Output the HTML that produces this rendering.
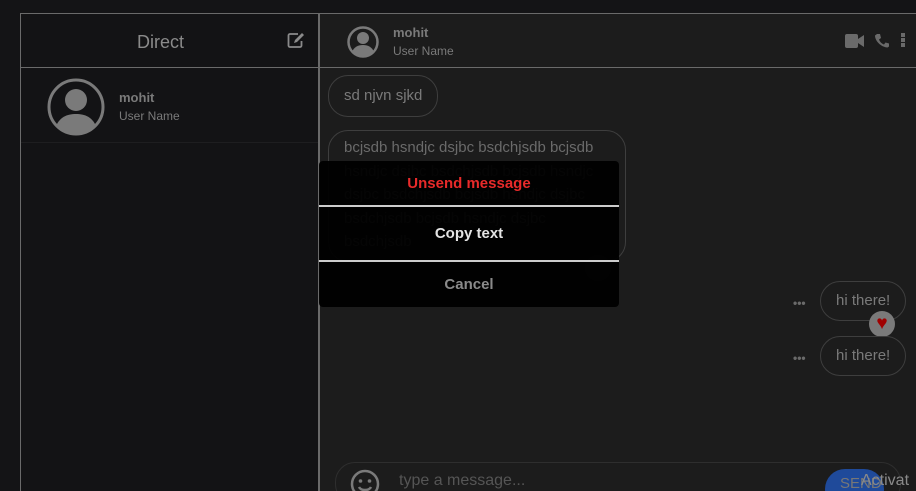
<!DOCTYPE html>
<html style="margin:0;width:916px;height:491px;overflow:hidden"><head><style>
body{margin:0;width:916px;height:491px;overflow:hidden;background:#141416;font-family:"Liberation Sans",sans-serif;position:relative}
.abs{position:absolute}
.left{left:20px;top:13px;width:297px;height:478px;border:1px solid #6a6a6a;border-bottom:none;background:#131315}
.right{left:319px;top:13px;width:597px;height:478px;border-top:1px solid #6a6a6a;border-left:1px solid #6a6a6a;background:#1c1c1c;overflow:hidden}
.bubble{position:absolute;border:1px solid #3e3e3e;border-radius:20px;color:#7a7a7a;font-size:15px;line-height:22px}
</style></head><body>
<div class="abs left">
 <div class="abs" style="left:0;top:0;width:297px;height:53px;border-bottom:1px solid #6a6a6a"></div>
 <div class="abs" style="left:116px;top:18px;color:#8a8a8a;font-size:18px">Direct</div>
 <svg class="abs" style="left:266px;top:18px" width="18" height="16" viewBox="0 0 18 16"><path d="M11 2H3a1.5 1.5 0 0 0-1.5 1.5v10A1.5 1.5 0 0 0 3 15h10a1.5 1.5 0 0 0 1.5-1.5V9" fill="none" stroke="#8a8a8a" stroke-width="1.8"/><path d="M15 1l2 2-7 7-3 1 1-3z" fill="#8a8a8a"/></svg>
 <svg class="abs" style="left:26px;top:64px" width="58" height="58" viewBox="0 0 58 58"><circle cx="29" cy="29" r="27" fill="none" stroke="#7a7a7a" stroke-width="3"/><circle cx="29" cy="22" r="11" fill="#7a7a7a"/><path d="M9 48c4-9 11-12 20-12s16 3 20 12a27 27 0 0 1-40 0z" fill="#7a7a7a"/></svg>
 <div class="abs" style="left:98px;top:76px;color:#7a7a7a;font-size:13px;font-weight:bold">mohit</div>
 <div class="abs" style="left:98px;top:95px;color:#7a7a7a;font-size:12px">User Name</div>
 <div class="abs" style="left:0;top:128px;width:297px;height:1px;background:#1e1e20"></div>
</div>
<div class="abs right">
 <div class="abs" style="left:0;top:0;width:600px;height:53px;border-bottom:1px solid #6a6a6a"></div>
 <svg class="abs" style="left:27px;top:12px" width="32" height="32" viewBox="0 0 32 32"><circle cx="16" cy="16" r="14.5" fill="none" stroke="#7a7a7a" stroke-width="2.5"/><circle cx="16" cy="12" r="6" fill="#7a7a7a"/><path d="M5 26c2-5 6-7 11-7s9 2 11 7a15 15 0 0 1-22 0z" fill="#7a7a7a"/></svg>
 <div class="abs" style="left:73px;top:11px;color:#7a7a7a;font-size:13px;font-weight:bold">mohit</div>
 <div class="abs" style="left:73px;top:30px;color:#7a7a7a;font-size:12px">User Name</div>
 <svg class="abs" style="left:525px;top:20px" width="20" height="14" viewBox="0 0 20 14"><rect x="0" y="0" width="13" height="14" rx="2" fill="#6a6a6a"/><path d="M13 5l6-4v12l-6-4z" fill="#6a6a6a"/></svg>
 <svg class="abs" style="left:555px;top:19px" width="14" height="15" viewBox="0 0 14 15"><path d="M2 1l3 0 1 4-2 1.5c1 2.5 2.5 4 5 5L10.5 9.5l3.5 1v3l-1.5 1C6 14 0 8 0 2.5z" fill="#6a6a6a"/></svg>
 <div class="abs" style="left:581px;top:19px;width:4px;height:14px;background:linear-gradient(#6a6a6a 0 4px,transparent 4px 5px,#6a6a6a 5px 9px,transparent 9px 10px,#6a6a6a 10px 14px)"></div>
 <div class="bubble" style="left:8px;top:61px;padding:9px 15px">sd njvn sjkd</div>
 <div class="bubble" style="left:8px;top:116px;width:266px;padding:5px 15px 7px;line-height:23.5px;color:#6a6a6a">bcjsdb hsndjc dsjbc bsdchjsdb bcjsdb hsndjc dsjbc bsdchjsdb bcjsdb hsndjc dsjbc bsdchjsdb bcjsdb hsndjc dsjbc bsdchjsdb bcjsdb hsndjc dsjbc bsdchjsdb</div>
 <div class="abs" style="left:265px;top:241px;width:26px;height:26px;border-radius:50%;background:#2a2a2a"></div>
 <div class="abs" style="left:473px;top:282px;color:#6a6a6a;font-size:12px;font-weight:bold">•••</div>
 <div class="bubble" style="left:500px;top:267px;padding:8px 15px">hi there!</div>
 <div class="abs" style="left:549px;top:297px;width:26px;height:26px;border-radius:50%;background:#7a7a7a;color:#a00000;font-size:19px;line-height:26px;text-align:center">♥</div>
 <div class="abs" style="left:473px;top:337px;color:#6a6a6a;font-size:12px;font-weight:bold">•••</div>
 <div class="bubble" style="left:500px;top:322px;padding:8px 15px">hi there!</div>
 <div class="abs" style="left:15px;top:448px;width:564px;height:40px;border:1px solid #2e2e2e;border-radius:20px"></div>
 <svg class="abs" style="left:30px;top:455px" width="30" height="30" viewBox="0 0 30 30"><circle cx="15" cy="15" r="13" fill="none" stroke="#7a7a7a" stroke-width="2.5"/><circle cx="10.5" cy="12" r="1.8" fill="#7a7a7a"/><circle cx="19.5" cy="12" r="1.8" fill="#7a7a7a"/><path d="M9 18c2 4 10 4 12 0" fill="none" stroke="#7a7a7a" stroke-width="2.5"/></svg>
 <div class="abs" style="left:79px;top:458px;color:#555;font-size:16px">type a message...</div>
 <div class="abs" style="left:505px;top:455px;width:59px;height:40px;border-radius:20px;background:#1f4a9a"></div>
 <div class="abs" style="left:520px;top:461px;color:#777;font-size:15px">SEND</div>
 <div class="abs" style="left:541px;top:458px;color:#8a8a8a;font-size:16px">Activat</div>
</div>
<div class="abs" style="left:319px;top:161px;width:300px;height:146px;background:rgba(0,0,0,0.95);border-radius:4px">
 <div class="abs" style="left:0;top:0;width:300px;height:45px;line-height:46px;text-align:center;color:#e82a2a;font-weight:bold;font-size:15px">Unsend message</div>
 <div class="abs" style="left:0;top:44px;width:300px;height:1.5px;background:#ccc"></div>
 <div class="abs" style="left:0;top:46px;width:300px;height:54px;line-height:54px;text-align:center;color:#e4e4e4;font-weight:bold;font-size:15px">Copy text</div>
 <div class="abs" style="left:0;top:99px;width:300px;height:1.5px;background:#ccc"></div>
 <div class="abs" style="left:0;top:101px;width:300px;height:45px;line-height:45px;text-align:center;color:#8a8a8a;font-weight:bold;font-size:15px">Cancel</div>
</div>
</body></html>
